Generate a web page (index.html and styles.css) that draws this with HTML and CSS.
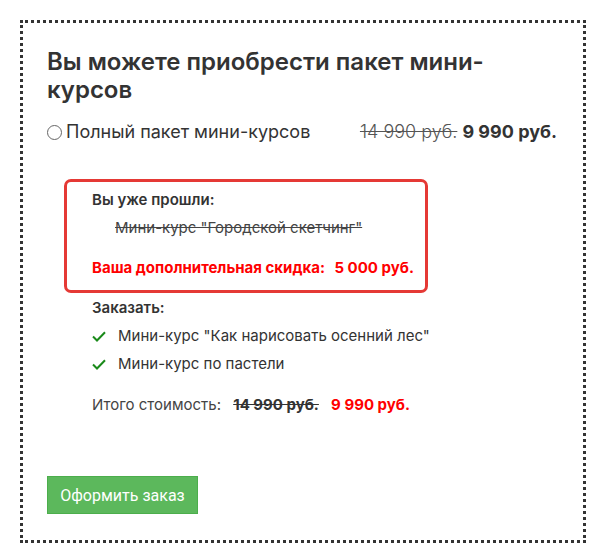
FILE: index.html
```html
<!DOCTYPE html>
<html lang="ru">
<head>
    <meta charset="UTF-8">
    <meta name="viewport" content="width=device-width, initial-scale=1.0">
    <title>Пакет мини-курсов</title>
    <link rel="stylesheet" href="styles.css">
</head>
<body>
    <div class="offer">
        <h2 class="offer-title">Вы можете приобрести пакет мини-курсов</h2>

        <label class="package">
            <span class="radio"></span>
            <span class="package-name">Полный пакет мини-курсов</span>
            <span class="package-price">
                <s class="old">14 990 руб.</s>
                <b class="new">9 990 руб.</b>
            </span>
        </label>

        <div class="passed">
            <div class="label">Вы уже прошли:</div>
            <div class="passed-item"><s>Мини-курс "Городской скетчинг"</s></div>
            <div class="discount">Ваша дополнительная скидка: <span class="discount-sum">5 000 руб.</span></div>
        </div>

        <div class="order">
            <div class="label">Заказать:</div>
            <ul class="order-list">
                <li>
                    <svg class="check" width="14" height="11" viewBox="0 0 14 11"><path d="M1 5.5 L5 9.5 L13 1.2" fill="none" stroke="#1a8a1a" stroke-width="2"/></svg>
                    Мини-курс "Как нарисовать осенний лес"
                </li>
                <li>
                    <svg class="check" width="14" height="11" viewBox="0 0 14 11"><path d="M1 5.5 L5 9.5 L13 1.2" fill="none" stroke="#1a8a1a" stroke-width="2"/></svg>
                    Мини-курс по пастели
                </li>
            </ul>
            <div class="total">
                Итого стоимость:
                <s class="total-old">14 990 руб.</s>
                <span class="total-new">9 990 руб.</span>
            </div>
        </div>

        <button class="submit">Оформить заказ</button>
    </div>
</body>
</html>
```

FILE: styles.css
```css
body {
    margin: 0;
    padding: 20px 20px 0 20px;
    background: #fff;
    font-family: Inter, "Noto Sans", sans-serif;
    color: #333;
}

.offer {
    width: 566px;
    box-sizing: border-box;
    border: 3px dotted #333;
    padding: 25px 26px 26px 24px;
}

.offer-title {
    margin: 0 0 16px 0;
    font-size: 24px;
    line-height: 28px;
    font-weight: 600;
    color: #333;
    padding-right: 60px;
}

.package {
    display: flex;
    align-items: center;
    font-size: 18px;
    line-height: 24px;
}

.radio {
    width: 13px;
    height: 13px;
    border: 1px solid #666;
    border-radius: 50%;
    margin-right: 4px;
}

.package-price {
    margin-left: auto;
}

.package-price .old {
    color: #555;
    font-weight: 300;
}

.package-price .new {
    font-weight: 700;
    color: #333;
}

.passed {
    margin: 35px 0 0 17px;
    width: 364px;
    box-sizing: border-box;
    border: 3px solid #e53935;
    border-radius: 7px;
    padding: 8px 10px 12px 25px;
    font-size: 15px;
    line-height: 20px;
}

.label {
    font-weight: 600;
    color: #333;
}

.passed-item {
    margin: 8px 0 0 23px;
    color: #444;
}

.discount {
    margin-top: 20px;
    color: #f00;
    font-weight: 700;
    white-space: nowrap;
}

.discount-sum {
    margin-left: 6px;
}

.order {
    margin-left: 45px;
    padding-top: 5px;
    font-size: 15px;
    line-height: 20px;
}

.order-list {
    list-style: none;
    margin: 4px 0 0 0;
    padding: 0;
}

.order-list li {
    display: flex;
    align-items: center;
    height: 28px;
}

.check {
    margin-right: 12px;
}

.total {
    margin-top: 17px;
    color: #444;
}

.total-old {
    font-weight: 700;
    color: #333;
    margin: 0 8px 0 8px;
}

.total-new {
    font-weight: 700;
    color: #f00;
}

.submit {
    margin-top: 61px;
    width: 151px;
    height: 38px;
    background: #5cb85c;
    border: 1px solid #4cae4c;
    color: #fff;
    font-family: Roboto, sans-serif;
    font-size: 16px;
    cursor: pointer;
}
```
